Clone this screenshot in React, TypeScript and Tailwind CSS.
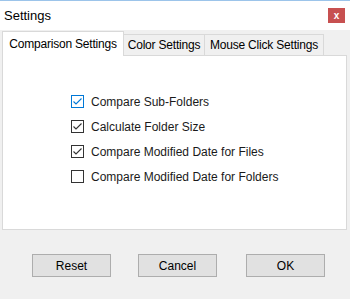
const options = [
  { label: "Compare Sub-Folders", checked: true, focused: true },
  { label: "Calculate Folder Size", checked: true },
  { label: "Compare Modified Date for Files", checked: true },
  { label: "Compare Modified Date for Folders", checked: false },
];

function Check({ checked, focused }: { checked: boolean; focused?: boolean }) {
  return (
    <span
      className={`w-[13px] h-[13px] border bg-white flex items-center justify-center shrink-0 ${
        focused ? "border-[#0078d7]" : "border-[#333333]"
      }`}
    >
      {checked && (
        <svg width="11" height="11" viewBox="0 0 11 11">
          <path
            d="M1.5 5.5 L4 8 L9.5 2.5"
            fill="none"
            stroke={focused ? "#0078d7" : "#333333"}
            strokeWidth="1.1"
          />
        </svg>
      )}
    </span>
  );
}

export default function App() {
  return (
    <div className="w-[350px] h-[299px] bg-[#f0f0f0] flex flex-col font-['Liberation_Sans',Arial,sans-serif] text-[12px] text-black overflow-hidden">
      {/* Title bar */}
      <div className="h-[30px] bg-white border-t border-[#9cc4ea] flex items-start justify-between shrink-0">
        <span className="text-[13px] pl-[4px] pt-[5px]">Settings</span>
        <span className="mt-[7px] mr-[5px] w-[17px] h-[15px] bg-[#c75050] text-white text-[10px] font-bold flex items-center justify-center leading-none">
          x
        </span>
      </div>

      {/* Tabs */}
      <div className="flex items-end h-[25px] pl-[2px] shrink-0 tracking-[-0.2px]">
        <div className="w-[122px] h-[25px] bg-white border border-b-0 border-[#d9d9d9] flex items-center justify-center relative top-[1px] z-10">
          Comparison Settings
        </div>
        <div className="w-[81px] h-[21px] bg-[#f0f0f0] border border-b-0 border-l-0 border-[#d9d9d9] flex items-center justify-center">
          Color Settings
        </div>
        <div className="w-[119px] h-[21px] bg-[#f0f0f0] border border-b-0 border-l-0 border-[#d9d9d9] flex items-center justify-center">
          Mouse Click Settings
        </div>
      </div>

      {/* Panel */}
      <div className="ml-[2px] mr-[3px] h-[175px] bg-white border border-[#d9d9d9] pt-[39px] pl-[68px] flex flex-col gap-[12px] shrink-0">
        {options.map((o) => (
          <label key={o.label} className="flex items-center gap-[7px] h-[13px]">
            <Check checked={o.checked} focused={o.focused} />
            <span className="text-[#1a1a1a]">{o.label}</span>
          </label>
        ))}
      </div>

      {/* Buttons */}
      <div className="flex pl-[32px] pt-[24px]">
        <button className="w-[79px] h-[23px] bg-[#e1e1e1] border border-[#adadad]">Reset</button>
        <button className="ml-[27px] w-[79px] h-[23px] bg-[#e1e1e1] border border-[#adadad]">Cancel</button>
        <button className="ml-[29px] w-[79px] h-[23px] bg-[#e1e1e1] border border-[#adadad]">OK</button>
      </div>
    </div>
  );
}
